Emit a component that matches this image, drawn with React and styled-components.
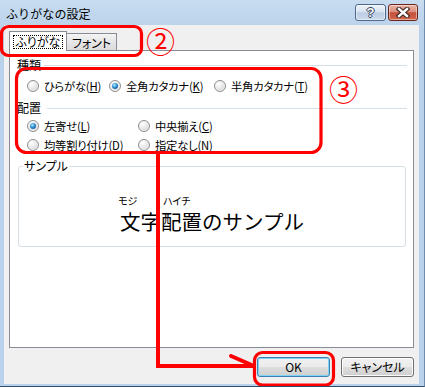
import React from 'react';
import styled, { createGlobalStyle } from 'styled-components';

const FONT = `"Noto Sans CJK JP", "Noto Sans", sans-serif`;
const RED = '#ff0000';

const GlobalStyle = createGlobalStyle`
  html, body {
    margin: 0;
    padding: 0;
    background: #fff;
  }
  body {
    font-family: ${FONT};
    font-size: 12px;
    color: #000;
  }
  * {
    box-sizing: border-box;
  }
`;

const Window = styled.div`
  position: relative;
  width: 425px;
  height: 387px;
  display: flex;
  flex-direction: column;
  background: linear-gradient(#c8dcf0, #b9d1ea 30px, #b9d1ea);
  border-bottom: 1px solid #2f4b69;
  border-right: 1px solid #6f8cae;
  overflow: hidden;
`;

const TitleBar = styled.div`
  height: 25px;
  flex: none;
  display: flex;
  align-items: flex-start;
  padding: 0 6px 0 6px;
`;

const Title = styled.div`
  flex: 1;
  margin-top: 7px;
  font-size: 12px;
  line-height: 14px;
  letter-spacing: 0.1px;
`;

const CaptionButtons = styled.div`
  display: flex;
  gap: 2px;
  margin-top: 4px;
`;

const CaptionButton = styled.div`
  width: ${p => p.$w}px;
  height: 17px;
  border-radius: 3px;
  display: flex;
  align-items: center;
  justify-content: center;
  border: 1px solid ${p => (p.$close ? '#6b2418' : '#50698a')};
  background: ${p =>
    p.$close
      ? 'linear-gradient(#eab3a6, #dc8e7c 45%, #c4503a 52%, #d0674d)'
      : 'linear-gradient(#eef3f9, #d8e3f1 45%, #bccde3 52%, #cbdaec)'};
  box-shadow: inset 0 0 0 1px rgba(255, 255, 255, 0.45);
`;

const HelpGlyph = styled.span`
  font-family: "Liberation Sans", sans-serif;
  font-weight: bold;
  font-size: 13px;
  line-height: 13px;
  color: #fff;
  text-shadow: 1px 0 0 #2d3d55, -1px 0 0 #2d3d55, 0 1px 0 #2d3d55, 0 -1px 0 #2d3d55;
`;

const Client = styled.div`
  flex: 1;
  margin: 0 5px 2px 4px;
  background: #f0f0f0;
  padding: 6px 5px 7px 5px;
  display: flex;
  flex-direction: column;
`;

const TabStrip = styled.div`
  height: 20px;
  display: flex;
  align-items: flex-end;
  position: relative;
  z-index: 1;
`;

const Tab = styled.div`
  display: flex;
  justify-content: center;
  border: 1px solid #898c95;
  border-bottom: none;
  width: ${p => (p.$active ? 58 : 50)}px;
  height: ${p => (p.$active ? 20 : 17)}px;
  margin-bottom: ${p => (p.$active ? 0 : 1)}px;
  padding-top: 3px;
  background: ${p => (p.$active ? '#fff' : 'linear-gradient(#f4f4f4, #e6e6e6 50%, #dcdcdc)')};
  ${p => !p.$active && 'border-left: none;'}
  font-size: 12px;
  line-height: 12px;
  font-feature-settings: "palt" 1;
`;

const FocusLabel = styled.span`
  width: 50px;
  height: 14px;
  border: 1px dotted #000;
  text-align: center;
  line-height: 12px;
`;

const Panel = styled.div`
  flex: 1;
  margin-top: -1px;
  background: #fff;
  border: 1px solid #898c95;
  padding: 6px 6px 0 7px;
  display: flex;
  flex-direction: column;
`;

const GroupHeader = styled.div`
  height: 16px;
  display: flex;
  align-items: center;
  gap: 3px;
  line-height: 16px;
  margin-top: ${p => p.$mt || 0}px;
`;

const HeaderLine = styled.div`
  flex: 1;
  height: 1px;
  background: #d5dfe5;
  margin-left: ${p => p.$ml || 0}px;
`;

const OptionRow = styled.div`
  display: grid;
  grid-template-columns: ${p => p.$cols};
  height: 16px;
  padding-left: 10px;
  margin-top: ${p => p.$mt}px;
`;

const Option = styled.label`
  display: flex;
  align-items: center;
  gap: 5px;
  white-space: nowrap;
  font-size: 11.3px;
  line-height: 16px;
  letter-spacing: -0.2px;
  font-feature-settings: "palt" 1;
`;

const RadioDot = styled.span`
  flex: none;
  width: 12px;
  height: 12px;
  border-radius: 50%;
  border: 1px solid #8c8e90;
  background: radial-gradient(circle at 35% 30%, #ffffff 0%, #ececec 40%, #c6c6c6 100%);
  box-shadow: inset 0 0 0 1px #f6f6f6;
  display: flex;
  align-items: center;
  justify-content: center;

  &::after {
    content: '';
    display: ${p => (p.$checked ? 'block' : 'none')};
    width: 6px;
    height: 6px;
    border-radius: 50%;
    background: radial-gradient(circle at 40% 35%, #b5ecff 0%, #2d8dd2 45%, #0b3f74 100%);
  }
`;

const SampleGroup = styled.fieldset`
  margin: 5px 1px 0 1px;
  padding: 0;
  border: 1px solid #d5dfe5;
  border-radius: 3px;
`;

const SampleLegend = styled.legend`
  margin-left: 4px;
  padding: 0 1px;
  line-height: 16px;
  font-feature-settings: "palt" 1;
`;

const SampleArea = styled.div`
  height: 72px;
  padding-top: 21px;
  display: flex;
  justify-content: center;
  align-items: flex-start;
`;

const Word = styled.div`
  display: flex;
  flex-direction: column;
  align-items: flex-start;
`;

const Ruby = styled.span`
  font-size: 10px;
  line-height: 11px;
  height: 11px;
  margin-left: ${p => p.$shift || 0}px;
  margin-bottom: 4px;
  font-feature-settings: "palt" 1;
`;

const Base = styled.span`
  font-size: 20.5px;
  line-height: 22px;
`;

const ButtonRow = styled.div`
  display: flex;
  justify-content: flex-end;
  gap: 11px;
  margin-top: 9px;
`;

const Button = styled.div`
  width: 73px;
  height: 20px;
  border-radius: 3px;
  border: 1px solid ${p => (p.$default ? '#3c7fb1' : '#707070')};
  background: linear-gradient(#f2f2f2, #ebebeb 48%, #dddddd 52%, #cfcfcf);
  box-shadow: inset 0 0 0 1px ${p => (p.$default ? '#7fd3f5' : '#fbfbfb')};
  display: flex;
  align-items: center;
  justify-content: center;
  line-height: 18px;
  font-feature-settings: "palt" 1;
`;

const Overlay = styled.svg`
  position: absolute;
  left: 0;
  top: 0;
  pointer-events: none;
  z-index: 5;
`;

const CircledNum = styled.span`
  position: absolute;
  left: ${p => p.$x}px;
  top: ${p => p.$y}px;
  font-size: 29px;
  line-height: 29px;
  color: ${RED};
  z-index: 6;
`;

function Radio({ checked, label, mnemonic }) {
  return (
    <Option>
      <RadioDot $checked={checked} />
      <span>
        {label}(<u>{mnemonic}</u>)
      </span>
    </Option>
  );
}

export default function App() {
  return (
    <>
      <GlobalStyle />
      <Window>
        <TitleBar>
          <Title>ふりがなの設定</Title>
          <CaptionButtons>
            <CaptionButton $w={31}>
              <HelpGlyph>?</HelpGlyph>
            </CaptionButton>
            <CaptionButton $w={30} $close>
              <svg width="14" height="11" viewBox="0 0 14 11">
                <path d="M3 2 L11 9 M11 2 L3 9" stroke="#3a2622" strokeWidth="4.6" strokeLinecap="square" />
                <path d="M3 2 L11 9 M11 2 L3 9" stroke="#fff" strokeWidth="2.4" strokeLinecap="square" />
              </svg>
            </CaptionButton>
          </CaptionButtons>
        </TitleBar>

        <Client>
          <TabStrip>
            <Tab $active>
              <FocusLabel>ふりがな</FocusLabel>
            </Tab>
            <Tab>フォント</Tab>
          </TabStrip>

          <Panel>
            <GroupHeader>
              種類
              <HeaderLine />
            </GroupHeader>
            <OptionRow $cols="82px 105px auto" $mt={5}>
              <Radio label="ひらがな" mnemonic="H" />
              <Radio checked label="全角カタカナ" mnemonic="K" />
              <Radio label="半角カタカナ" mnemonic="T" />
            </OptionRow>

            <GroupHeader $mt={6}>
              配置
              <HeaderLine $ml={3} />
            </GroupHeader>
            <OptionRow $cols="111px auto" $mt={2}>
              <Radio checked label="左寄せ" mnemonic="L" />
              <Radio label="中央揃え" mnemonic="C" />
            </OptionRow>
            <OptionRow $cols="111px auto" $mt={3}>
              <Radio label="均等割り付け" mnemonic="D" />
              <Radio label="指定なし" mnemonic="N" />
            </OptionRow>

            <SampleGroup>
              <SampleLegend>サンプル</SampleLegend>
              <SampleArea>
                <Word>
                  <Ruby $shift={-2}>モジ</Ruby>
                  <Base>文字</Base>
                </Word>
                <Word>
                  <Ruby $shift={2}>ハイチ</Ruby>
                  <Base>配置</Base>
                </Word>
                <Word>
                  <Ruby />
                  <Base>のサンプル</Base>
                </Word>
              </SampleArea>
            </SampleGroup>
          </Panel>

          <ButtonRow>
            <Button $default>OK</Button>
            <Button>キャンセル</Button>
          </ButtonRow>
        </Client>

        <Overlay width="425" height="387" viewBox="0 0 425 387">
          <g fill="none" stroke={RED} strokeWidth="3.2">
            <rect x="1.5" y="26.5" width="140" height="29" rx="7" />
            <rect x="16.5" y="68.5" width="304.5" height="84" rx="10" />
            <rect x="254.5" y="352.5" width="79" height="32.5" rx="8" />
          </g>
          <g fill="none" stroke={RED} strokeWidth="4" strokeLinejoin="miter">
            <path d="M158 153 L158 366 L254 366" />
            <path d="M231 356 L254 366" strokeLinecap="round" />
          </g>
        </Overlay>
        <CircledNum $x={146} $y={26}>②</CircledNum>
        <CircledNum $x={329} $y={74}>③</CircledNum>
      </Window>
    </>
  );
}
